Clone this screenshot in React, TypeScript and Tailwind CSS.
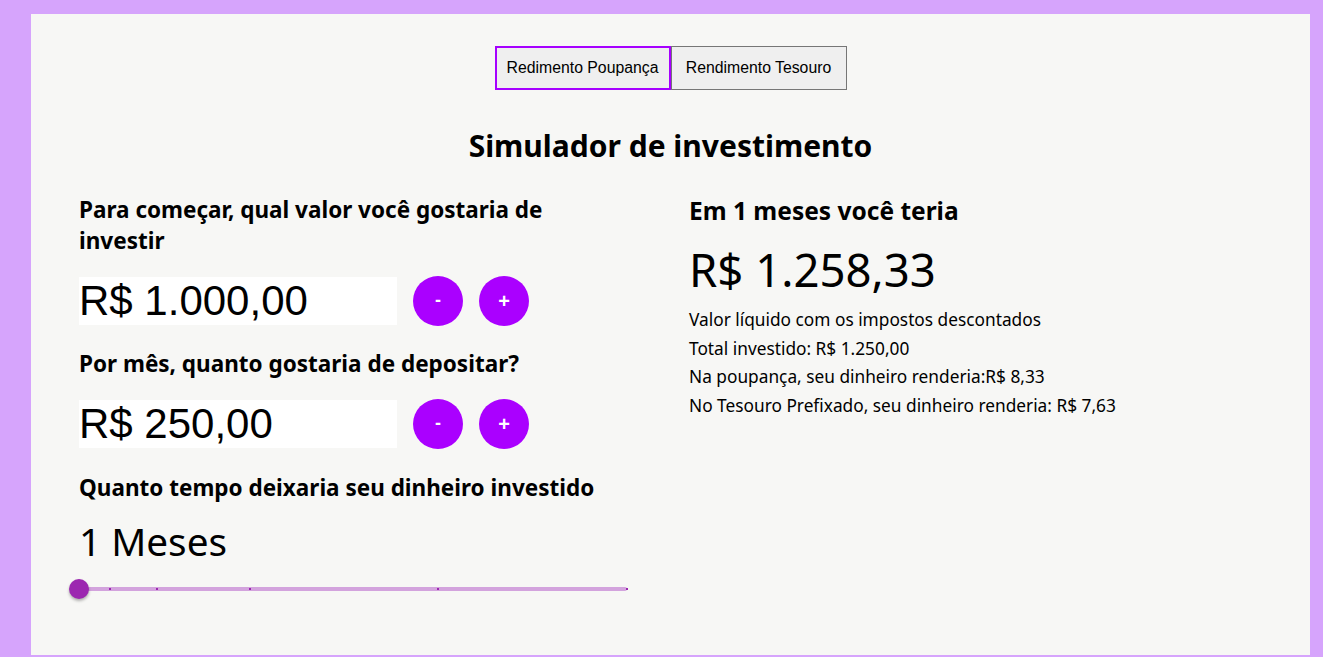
import React, { useState } from 'react';

const marks = [0, 5.66, 14.2, 31.2, 65.5, 100];

const Stepper = ({ value }: { value: string }) => (
  <div className="flex items-center h-[48px]">
    <div className="w-[318px] h-[48px] bg-white flex items-center font-['Liberation_Sans',Arial,sans-serif] text-[42px] leading-none text-black">
      {value}
    </div>
    <button className="ml-[16px] w-[50px] h-[50px] rounded-full bg-[#aa00ff] text-white font-bold text-[18px] font-['Liberation_Sans',Arial,sans-serif]">
      -
    </button>
    <button className="ml-[16px] w-[50px] h-[50px] rounded-full bg-[#aa00ff] text-white font-bold text-[20px] font-['Liberation_Sans',Arial,sans-serif]">
      +
    </button>
  </div>
);

export default function App() {
  const [tab, setTab] = useState(0);

  return (
    <div className="h-[657px] bg-[#d6a4fc] pl-[31px] pr-[13px] pt-[14px] pb-[2px] font-['Noto_Sans',sans-serif]">
      <div className="h-full bg-[#f7f7f5] pt-[32px] px-[48px]">
        {/* Tabs */}
        <div className="flex justify-center font-['Liberation_Sans',Arial,sans-serif] text-[15.8px] text-black">
          <button
            onClick={() => setTab(0)}
            className={`h-[44px] w-[176px] bg-[#efefef] ${tab === 0 ? 'border-2 border-[#a600ff]' : 'border border-[#767676]'}`}
          >
            Redimento Poupança
          </button>
          <button
            onClick={() => setTab(1)}
            className={`h-[44px] w-[176px] bg-[#efefef] ${tab === 1 ? 'border-2 border-[#a600ff]' : 'border border-[#767676]'}`}
          >
            Rendimento Tesouro
          </button>
        </div>

        <h1 className="mt-[36px] text-center text-[30px] font-bold leading-[40px] text-black">
          Simulador de investimento
        </h1>

        <div className="mt-[28px] grid grid-cols-[548px_1fr] gap-x-[62px]">
          {/* left column */}
          <div>
            <h2 className="w-[500px] text-[22.5px] font-bold leading-[31px] text-black">
              Para começar, qual valor você gostaria de investir
            </h2>
            <div className="mt-[20.5px]">
              <Stepper value="R$ 1.000,00" />
            </div>
            <h2 className="mt-[23.5px] text-[22.5px] font-bold leading-[31px] text-black">
              Por mês, quanto gostaria de depositar?
            </h2>
            <div className="mt-[20.5px]">
              <Stepper value="R$ 250,00" />
            </div>
            <h2 className="mt-[24.5px] text-[22.5px] font-bold leading-[31px] text-black">
              Quanto tempo deixaria seu dinheiro investido
            </h2>
            <div className="mt-[11.5px] text-[38.7px] leading-[52px] text-black">1 Meses</div>

            {/* slider */}
            <div className="relative mt-[11px] h-[22px]">
              <div className="absolute left-0 right-0 top-[9px] h-[4px] rounded-full bg-[#d3a3dd]" />
              {marks.map((m) => (
                <div
                  key={m}
                  className="absolute top-[10px] w-[2px] h-[2px] bg-[#9c27b0]"
                  style={{ left: `calc(${m}% - 1px)` }}
                />
              ))}
              <div className="absolute left-[-10px] top-[1px] w-[20px] h-[20px] rounded-full bg-[#9c27b0] shadow-[0_2px_3px_rgba(0,0,0,0.3)]" />
            </div>
          </div>

          {/* right column */}
          <div className="text-black">
            <h2 className="mt-[1px] text-[24.5px] font-bold leading-[31px]">Em 1 meses você teria</h2>
            <div className="mt-[12.5px] text-[45.5px] leading-[60px]">R$ 1.258,33</div>
            <div className="mt-[7.5px] text-[17.3px] leading-[28.7px]">
              <p>Valor líquido com os impostos descontados</p>
              <p>Total investido: R$ 1.250,00</p>
              <p>Na poupança, seu dinheiro renderia:R$ 8,33</p>
              <p>No Tesouro Prefixado, seu dinheiro renderia: R$ 7,63</p>
            </div>
          </div>
        </div>
      </div>
    </div>
  );
}
